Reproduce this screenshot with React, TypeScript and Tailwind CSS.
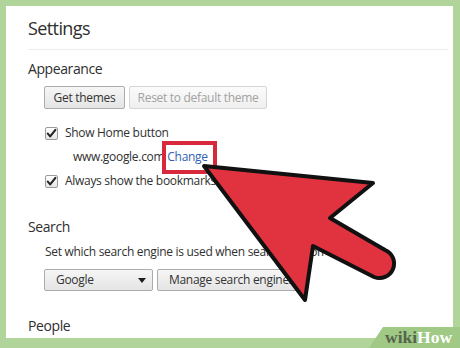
import React from 'react';

const font = { fontFamily: '"Open Sans", "Noto Sans", sans-serif' };

const Checkbox: React.FC = () => (
  <span className="w-[13px] h-[13px] border border-[#9a9a9a] rounded-[2px] bg-linear-to-b from-white to-[#e6e6e6] flex items-center justify-center shrink-0">
    <svg width="11" height="11" viewBox="0 0 11 11">
      <path d="M1.8 5.6 L4.2 8.4 L9.4 1.8" fill="none" stroke="#262626" strokeWidth="2.1" strokeLinecap="round" strokeLinejoin="round" />
    </svg>
  </span>
);

// shared look of the grey chrome buttons
const btn = 'flex items-center border rounded-[2px] text-[12px] tracking-[-0.3px] bg-linear-to-b whitespace-nowrap';

const App: React.FC = () => {
  return (
    <div className="relative w-[460px] h-[348px] bg-[#b1d49a] pt-[6px] pl-[6px] pr-[7px] pb-[10px] overflow-hidden" style={font}>
      <div className="bg-white h-full pl-[22px] pr-[5px] pt-[10px] text-[#303030]">
        {/* header */}
        <div className="pb-[9px] border-b border-[#ececec]">
          <h1 className="h-[24px] leading-[24px] text-[18px] tracking-[-0.6px] text-[#2e2e2e]">Settings</h1>
        </div>

        {/* appearance */}
        <h2 className="mt-[9px] h-[20px] leading-[20px] text-[14px] tracking-[-0.4px] text-[#2e2e2e]">Appearance</h2>
        <div className="ml-[16px] mt-[7px] flex gap-[4px]">
          <div className={`${btn} h-[23px] w-[81px] justify-center border-[#acacac] from-[#f6f6f6] to-[#e4e4e4] text-[#333]`}>Get themes</div>
          <div className={`${btn} h-[23px] w-[138px] justify-center border-[#d6d6d6] from-[#fbfbfb] to-[#efefef] text-[#a2a2a2]`}>Reset to default theme</div>
        </div>

        <div className="ml-[17px] mt-[16px] h-[16px] flex items-center gap-[7px] text-[12px] leading-[16px] tracking-[-0.3px]">
          <Checkbox />
          <span>Show Home button</span>
        </div>
        <div className="ml-[45px] mt-[8px] h-[16px] flex items-center text-[12px] leading-[16px] tracking-[-0.3px]">
          <span>www.google.com</span>
          <span className="relative ml-[3px] text-[#2f5fb3]">
            Change
            <span className="absolute -left-[5px] -right-[9px] -top-[8px] -bottom-[9px] border-[4px] border-[#d8283c]" />
          </span>
        </div>
        <div className="ml-[17px] mt-[8px] h-[16px] flex items-center gap-[7px] text-[12px] leading-[16px] tracking-[-0.3px]">
          <Checkbox />
          <span>Always show the bookmarks bar</span>
        </div>

        {/* search */}
        <h2 className="mt-[28px] h-[20px] leading-[20px] text-[14px] tracking-[-0.4px] text-[#2e2e2e]">Search</h2>
        <div className="ml-[17px] mt-[7px] w-[281px] h-[16px] overflow-hidden whitespace-nowrap text-[12px] leading-[16px] tracking-[-0.3px]">
          Set which search engine is used when searching from the omnibox.
        </div>
        <div className="ml-[16px] mt-[9px] flex gap-[4px]">
          <div className={`${btn} h-[22px] w-[109px] justify-between pl-[11px] pr-[6px] border-[#acacac] from-[#f6f6f6] to-[#e4e4e4] text-[#333]`}>
            <span>Google</span>
            <svg width="8" height="5" viewBox="0 0 8 5">
              <path d="M0 0 H8 L4 5 Z" fill="#1e1e1e" />
            </svg>
          </div>
          <div className={`${btn} h-[22px] w-[146px] overflow-hidden pl-[11px] border-[#acacac] from-[#f6f6f6] to-[#e4e4e4] text-[#333]`}>
            Manage search engines...
          </div>
        </div>

        {/* people */}
        <h2 className="mt-[25px] h-[20px] leading-[20px] text-[14px] tracking-[-0.4px] text-[#2e2e2e]">People</h2>
      </div>

      {/* annotation arrow */}
      <svg className="absolute left-0 top-0 pointer-events-none" width="460" height="348" viewBox="0 0 460 348">
        <path
          d="M204,166 L373,183 L330,218 L385,250 A14,14 0 0 1 374,277 L313,246 L305,300 Z"
          fill="#e0323f"
          stroke="#111"
          strokeWidth="4"
          strokeLinejoin="round"
        />
      </svg>

      {/* wikiHow mark */}
      <svg className="absolute left-0 top-0 pointer-events-none" width="460" height="348" viewBox="0 0 460 348">
        <polygon points="369,348 383,327 460,327 460,348" fill="#9fc985" />
      </svg>
      <div
        className="absolute left-[385px] top-[327px] h-[21px] leading-[21px] text-[17.5px] font-bold"
        style={{ fontFamily: '"Liberation Serif", "DejaVu Serif", serif' }}
      >
        <span className="text-[#56654c]">wiki</span>
        <span className="text-white">How</span>
      </div>
    </div>
  );
};

export default App;
